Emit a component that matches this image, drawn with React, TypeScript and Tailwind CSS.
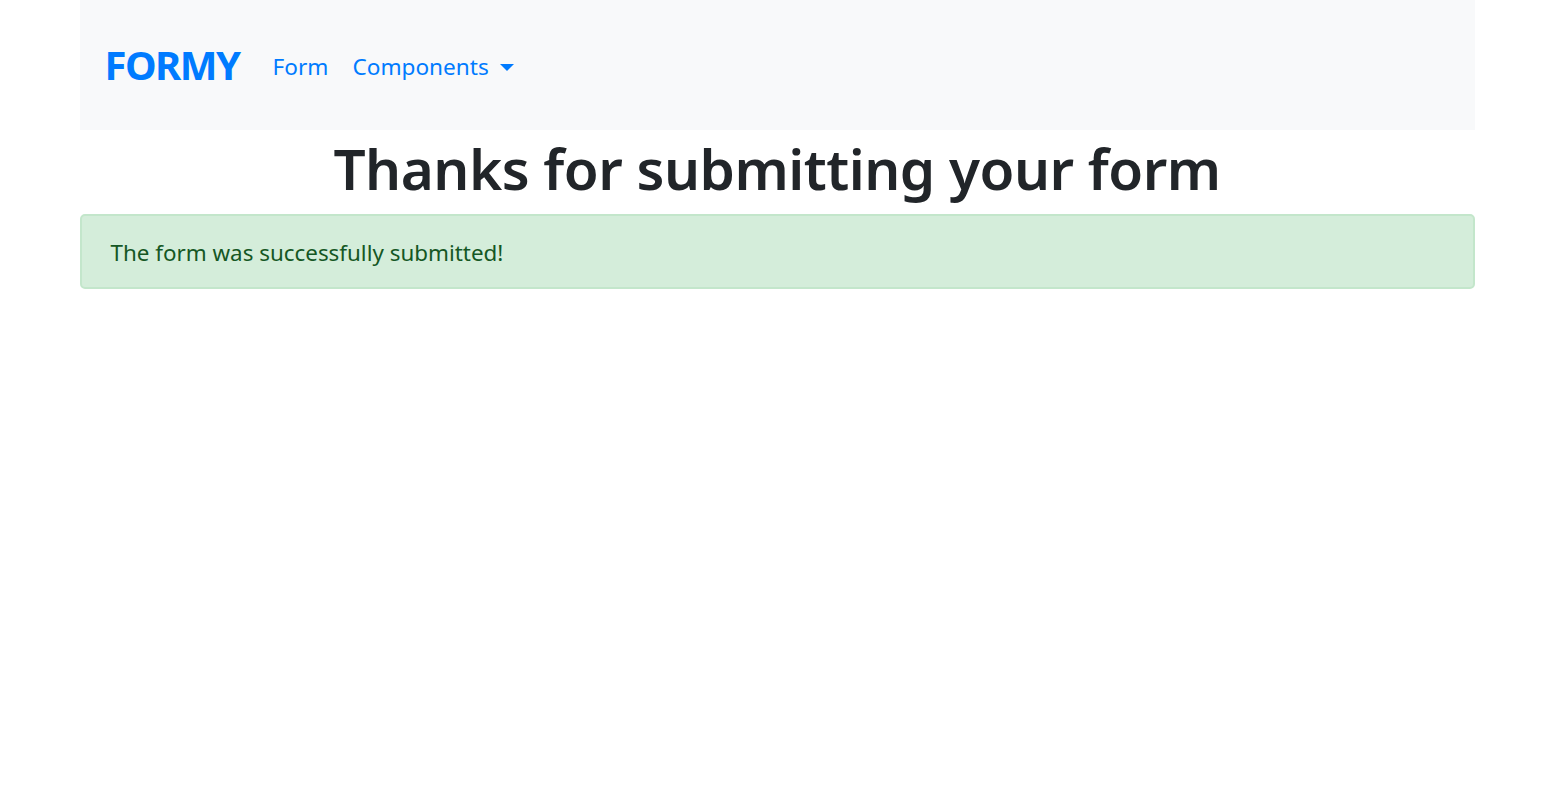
const navLinks = [
  { label: 'Form', href: '/form' },
];

const App = () => {
  return (
    <div className="min-h-screen bg-white font-['Noto_Sans',sans-serif] text-[#212529]">
      <div className="mx-auto w-[1395px]">
        {/* Navbar */}
        <nav className="flex h-[130px] items-center bg-[#f8f9fa] px-[25px]">
          <a href="/" className="mr-[33px] text-[40px] font-bold leading-none tracking-[-1.5px] text-[#007bff]">
            FORMY
          </a>
          <ul className="mt-[4px] flex items-center gap-[24px] text-[22.6px] text-[#007bff]">
            {navLinks.map((link) => (
              <li key={link.label}>
                <a href={link.href}>{link.label}</a>
              </li>
            ))}
            <li className="flex items-center">
              <a href="#" className="flex items-center">
                Components
                <span className="ml-[11px] mt-[1px] inline-block h-0 w-0 border-x-[7.5px] border-t-[7.5px] border-x-transparent border-t-[#007bff]"></span>
              </a>
            </li>
          </ul>
        </nav>

        <h1 className="pb-[8px] pt-[2px] text-center text-[56.6px] font-semibold leading-[1.3] tracking-[-0.5px]">
          Thanks for submitting your form
        </h1>

        <div className="rounded-[5px] border-2 border-[#c3e6cb] bg-[#d4edda] px-[29px] pb-[16px] pt-[19px] text-[22.4px] leading-[36px] text-[#155724]">
          The form was successfully submitted!
        </div>
      </div>
    </div>
  );
};

export default App;
